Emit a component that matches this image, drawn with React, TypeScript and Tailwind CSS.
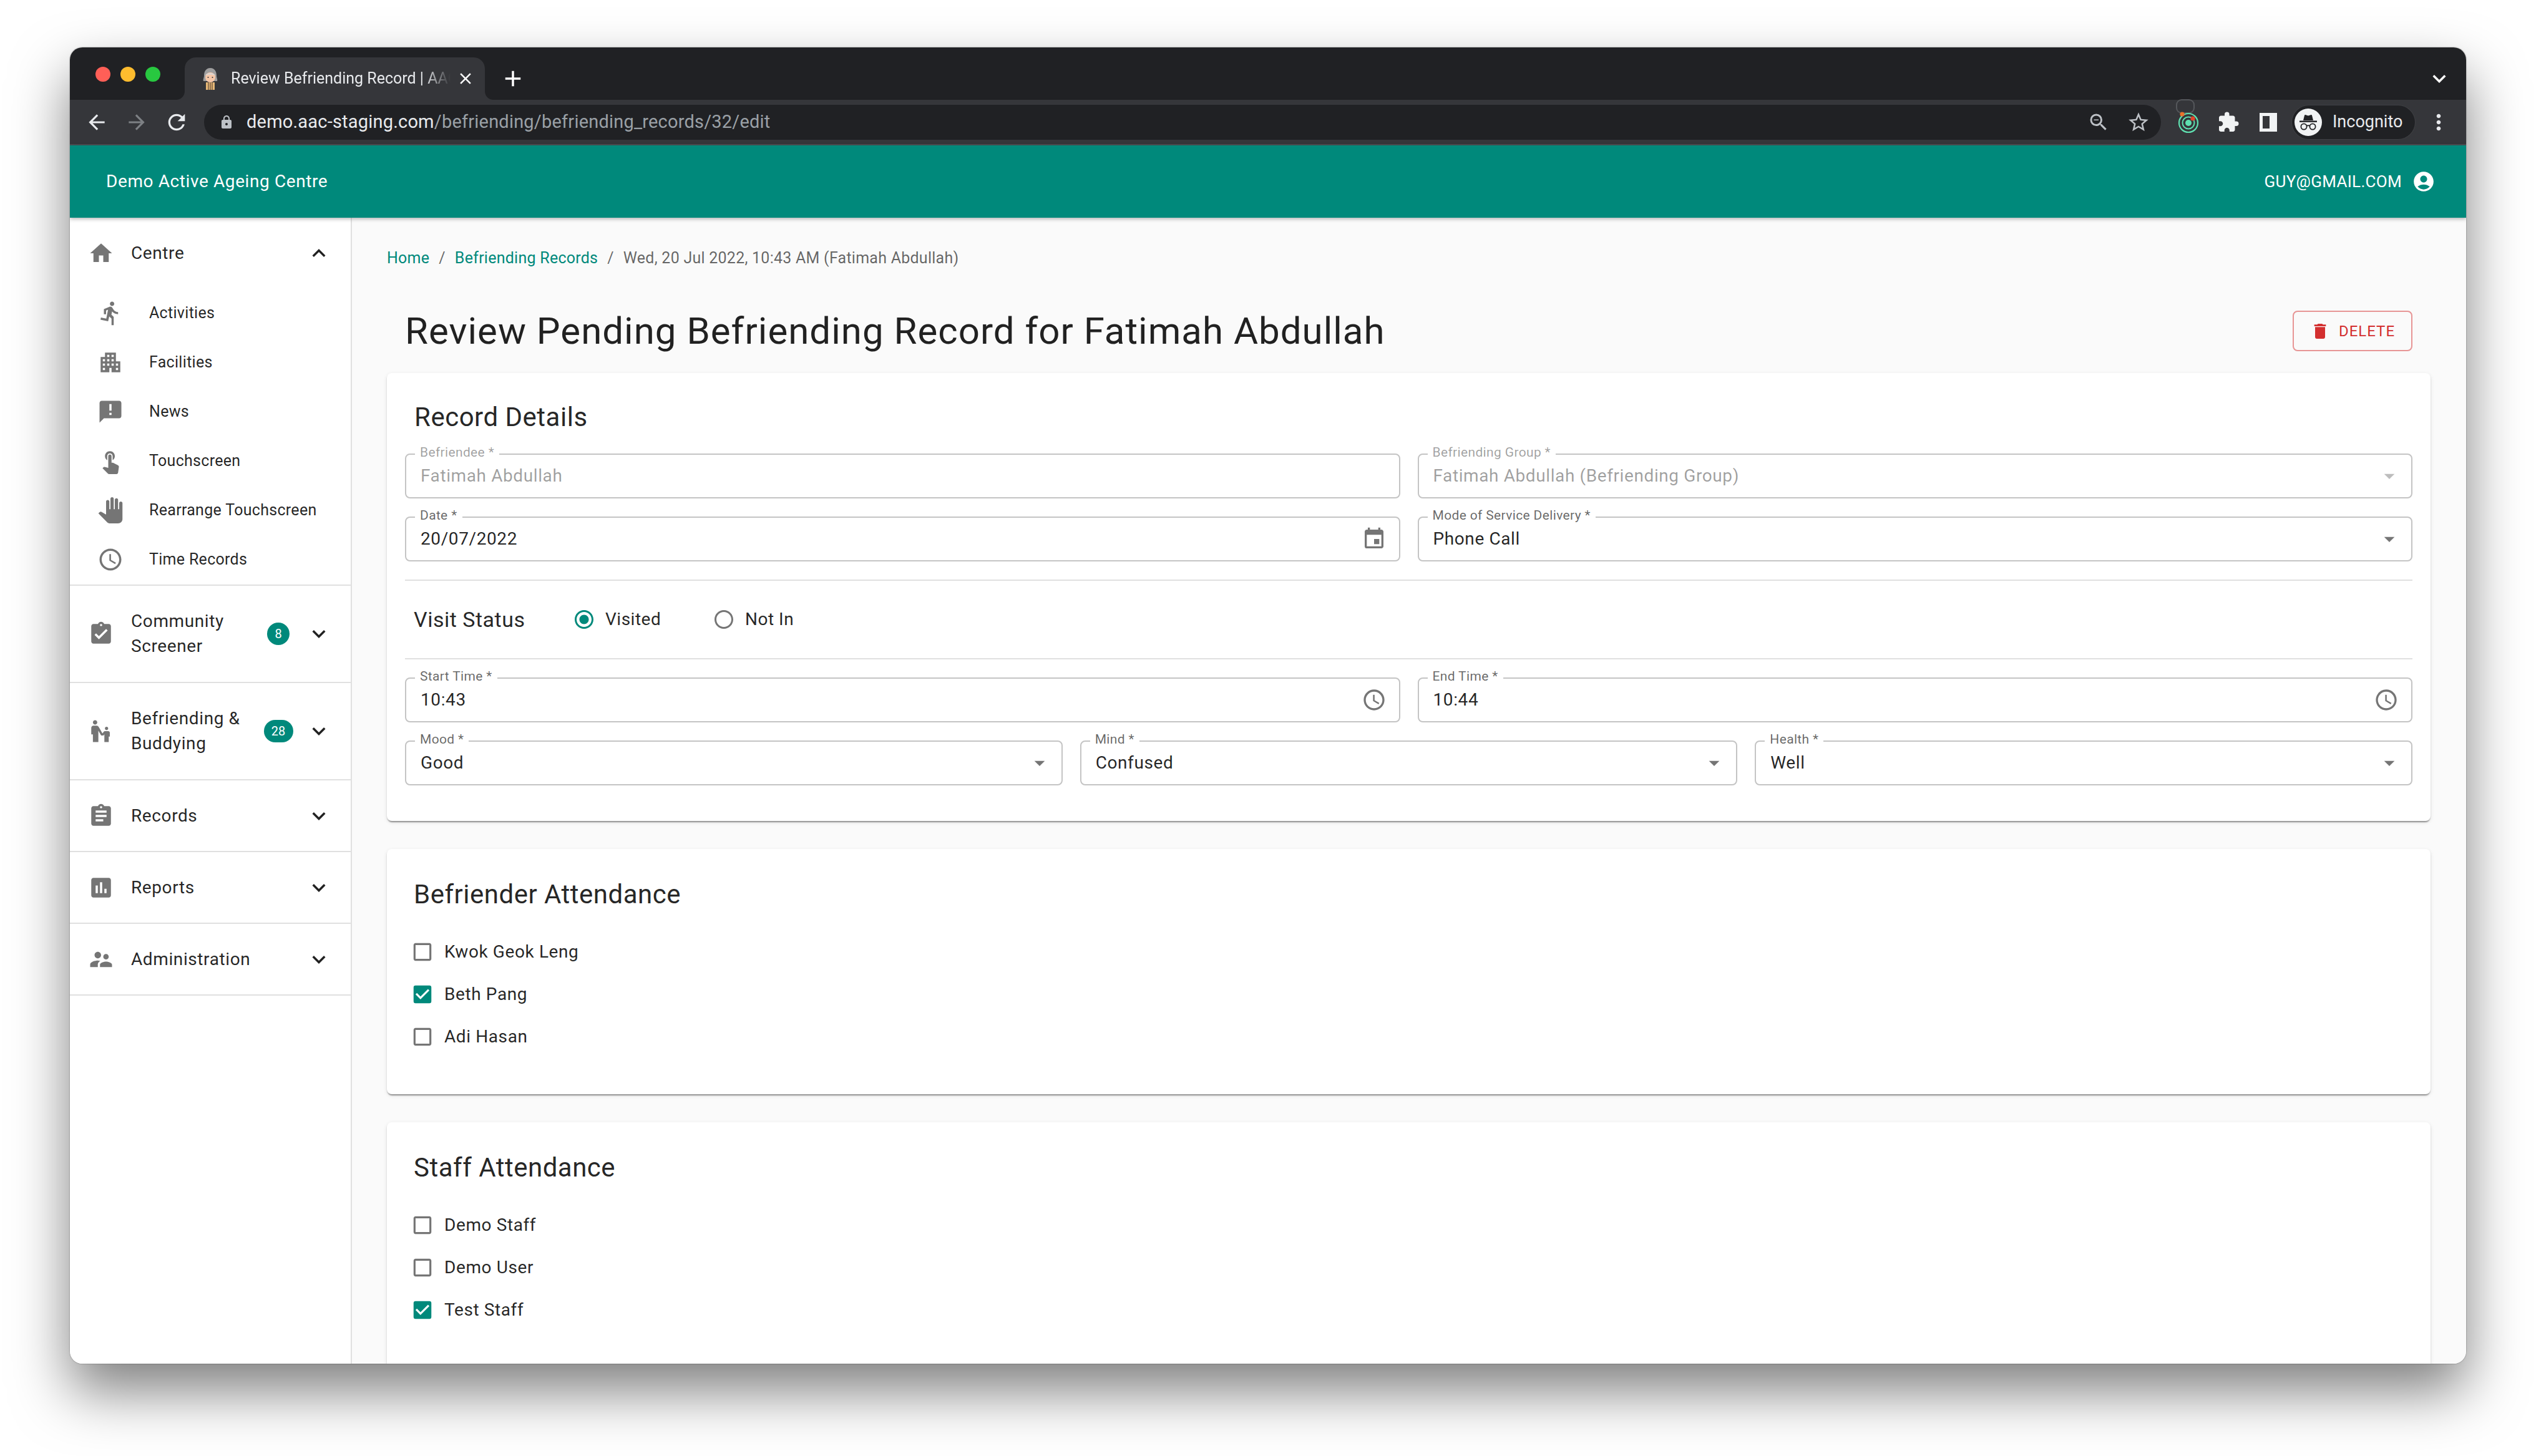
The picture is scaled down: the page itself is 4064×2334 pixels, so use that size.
import React from "react";
import {
  MdHome, MdDirectionsRun, MdApartment, MdAnnouncement, MdTouchApp, MdPanTool, MdAccessTime,
  MdAssignmentTurnedIn, MdEscalatorWarning, MdAssignment, MdAssessment, MdSupervisorAccount,
  MdExpandMore, MdExpandLess, MdEvent, MdArrowDropDown, MdDelete, MdAccountCircle, MdCheckBox,
  MdCheckBoxOutlineBlank, MdRadioButtonChecked, MdRadioButtonUnchecked, MdArrowBack, MdArrowForward,
  MdRefresh, MdLock, MdZoomOut, MdStarBorder, MdExtension, MdMoreVert, MdClose, MdAdd,
} from "react-icons/md";

function Favicon() {
  return (
    <svg width="32" height="36" viewBox="0 0 32 36">
      <path d="M16 1c-7 0-10 6-10 12 0 4-2 6-1 9h22c1-3-1-5-1-9 0-6-3-12-10-12z" fill="#9e9e9e" />
      <ellipse cx="16" cy="16" rx="8" ry="8" fill="#f6c7a8" />
      <path d="M8 13c2-5 14-5 16 0-5-2-11-2-16 0z" fill="#d8d8d8" />
      <circle cx="12.5" cy="16" r="1" fill="#333" />
      <circle cx="19.5" cy="16" r="1" fill="#333" />
      <rect x="9" y="24" width="14" height="12" fill="#e6b877" />
      <path d="M13 24v12M16 24v12M19 24v12" stroke="#5b4636" strokeWidth="1.2" />
    </svg>
  );
}

function Orbit() {
  return (
    <svg width="44" height="60" viewBox="0 0 44 60">
      <rect x="3" y="1" width="28" height="21" rx="8" fill="none" stroke="#55575b" strokeWidth="2" />
      <circle cx="22" cy="38" r="15" fill="none" stroke="#5fe0b0" strokeWidth="2.2" />
      <circle cx="22" cy="38" r="9.5" fill="none" stroke="#5fe0b0" strokeWidth="2" />
      <circle cx="22" cy="38" r="5" fill="#5fe0b0" />
      <circle cx="12" cy="24" r="3.6" fill="#e8712c" />
      <circle cx="29" cy="31" r="3.6" fill="#e0452c" />
    </svg>
  );
}

function Incognito() {
  return (
    <svg width="44" height="44" viewBox="0 0 44 44">
      <circle cx="22" cy="22" r="22" fill="#f1f3f4" />
      <path d="M14 19l2-8c.3-1 1-1.2 2-.8l4 1.2 4-1.2c1-.4 1.700-.2 2 .8l2 8z" fill="#202124" />
      <rect x="8" y="19.500" width="28" height="2.400" fill="#202124" />
      <circle cx="15" cy="29" r="4.600" fill="none" stroke="#202124" strokeWidth="1.800" />
      <circle cx="29" cy="29" r="4.600" fill="none" stroke="#202124" strokeWidth="1.800" />
      <path d="M19.500 28c1.500-1 3.500-1 5 0" fill="none" stroke="#202124" strokeWidth="1.800" />
    </svg>
  );
}

function TabFlare({ flip }: { flip?: boolean }) {
  return (
    <svg width="14" height="14" viewBox="0 0 14 14" className={flip ? "absolute bottom-0 -right-[14px] -scale-x-100" : "absolute bottom-0 -left-[14px]"}>
      <path d="M14 0v14H0c8 0 14-6 14-14z" fill="#35363a" />
    </svg>
  );
}

function ChromeBar() {
  return (
    <div className="shrink-0">
      <div className="flex h-[84px] bg-[#202124]">
        <div className="ml-[41px] mt-[31px] flex h-[24px] gap-[16px]">
          <div className="h-[24px] w-[24px] rounded-full bg-[#ff5f57]" />
          <div className="h-[24px] w-[24px] rounded-full bg-[#febc2e]" />
          <div className="h-[24px] w-[24px] rounded-full bg-[#28c840]" />
        </div>
        <div className="relative ml-[39px] mt-[16px] flex h-[68px] w-[481px] items-center rounded-t-[18px] bg-[#35363a] pl-[25px]">
          <TabFlare />
          <TabFlare flip />
          <Favicon />
          <div className="ml-[17px] w-[352px] overflow-hidden whitespace-nowrap text-[25px] text-[#e8eaed] [mask-image:linear-gradient(to_right,black_88%,transparent_100%)]">
            Review Befriending Record | AAC
          </div>
          <MdClose size={30} className="ml-[9px] text-white" />
        </div>
        <MdAdd size={42} className="ml-[24px] mt-[29px] text-white" />
        <MdExpandMore size={42} className="ml-auto mr-[22px] mt-[29px] text-white" />
      </div>
      <div className="flex h-[73px] items-center border-b-2 border-[#4d4e52] bg-[#35363a] pl-[11px]">
        <div className="flex w-[64px] justify-center"><MdArrowBack size={38} className="text-[#e8eaed]" /></div>
        <div className="flex w-[64px] justify-center"><MdArrowForward size={38} className="text-[#7d8084]" /></div>
        <div className="flex w-[64px] justify-center"><MdRefresh size={40} className="text-[#e8eaed]" /></div>
        <div className="ml-[12px] flex h-[56px] w-[3136px] items-center rounded-full bg-[#202124] pl-[24px] pr-[4px]">
          <MdLock size={24} className="text-[#bdc1c6]" />
          <div className="ml-[20px] whitespace-nowrap text-[29px] tracking-[0.2px] text-[#e8eaed]">
            demo.aac-staging.com<span className="text-[#9aa0a6]">/befriending/befriending_records/32/edit</span>
          </div>
          <div className="ml-auto flex w-[64px] justify-center"><MdZoomOut size={36} className="text-[#bdc1c6]" /></div>
          <div className="flex w-[64px] justify-center"><MdStarBorder size={38} className="text-[#bdc1c6]" /></div>
        </div>
        <div className="ml-[12px] flex w-[64px] -translate-y-[7px] justify-center"><Orbit /></div>
        <div className="flex w-[64px] justify-center"><MdExtension size={36} className="text-[#f1f3f4]" /></div>
        <div className="flex w-[64px] justify-center">
          <div className="flex h-[30px] w-[28px] justify-center border-[5px] border-[#f1f3f4] border-r-[12px] bg-[#35363a]" />
        </div>
        <div className="ml-[6px] flex h-[54px] w-[197px] items-center rounded-full bg-[#202124] pl-[4px] ring-1 ring-[#3f4044]">
          <Incognito />
          <span className="ml-[17px] text-[27px] text-[#e8eaed]">Incognito</span>
        </div>
        <div className="ml-[6px] flex w-[64px] justify-center"><MdMoreVert size={40} className="text-[#e8eaed]" /></div>
      </div>
    </div>
  );
}

type IconT = React.ComponentType<{ size?: number; className?: string }>;

function SubItem({ icon: Icon, label }: { icon: IconT; label: string }) {
  return (
    <div className="flex h-[79px] items-center pl-[44px]">
      <Icon size={42} className="shrink-0 text-[#757575]" />
      <span className="ml-[41px] whitespace-nowrap text-[25px] tracking-[0.3px] text-[#000000de]">{label}</span>
    </div>
  );
}

function NavGroup({ icon: Icon, label, badge, tall }: { icon: IconT; label: string; badge?: string; tall?: boolean }) {
  return (
    <div className={`flex items-center border-b-2 border-[#e0e0e0] pl-[29px] pr-[30px] ${tall ? "h-[156px]" : "h-[115px]"}`}>
      <Icon size={42} className="shrink-0 text-[#757575]" />
      <span className="ml-[27px] w-[210px] text-[28px] leading-[40px] tracking-[0.6px] text-[#000000de]">{label}</span>
      {badge ? (
        <div className="ml-auto mr-[20px] flex w-[48px] justify-center">
          <span className={`flex h-[36px] items-center justify-center rounded-full bg-[#00897b] text-[20px] text-white ${badge.length > 1 ? "w-[47px]" : "w-[36px]"}`}>{badge}</span>
        </div>
      ) : null}
      <MdExpandMore size={42} className={`shrink-0 text-[#000000de] ${badge ? "" : "ml-auto"}`} />
    </div>
  );
}

function Sidebar() {
  return (
    <aside className="w-[452px] shrink-0 border-r-2 border-[#e0e0e0] bg-white">
      <div className="h-[590px] border-b-2 border-[#e0e0e0]">
        <div className="flex h-[113px] items-center pl-[29px] pr-[30px]">
          <MdHome size={42} className="text-[#757575]" />
          <span className="ml-[27px] text-[28px] tracking-[0.6px] text-[#000000de]">Centre</span>
          <MdExpandLess size={42} className="ml-auto text-[#000000de]" />
        </div>
        <SubItem icon={MdDirectionsRun} label="Activities" />
        <SubItem icon={MdApartment} label="Facilities" />
        <SubItem icon={MdAnnouncement} label="News" />
        <SubItem icon={MdTouchApp} label="Touchscreen" />
        <SubItem icon={MdPanTool} label="Rearrange Touchscreen" />
        <SubItem icon={MdAccessTime} label="Time Records" />
      </div>
      <NavGroup icon={MdAssignmentTurnedIn} label="Community Screener" badge="8" tall />
      <NavGroup icon={MdEscalatorWarning} label="Befriending & Buddying" badge="28" tall />
      <NavGroup icon={MdAssignment} label="Records" />
      <NavGroup icon={MdAssessment} label="Reports" />
      <NavGroup icon={MdSupervisorAccount} label="Administration" />
    </aside>
  );
}

function Field({ label, value, disabled, icon }: { label: string; value: string; disabled?: boolean; icon?: "date" | "time" | "select" }) {
  return (
    <div className="relative flex h-[72px] items-center rounded-[8px] border-2 border-[#c4c4c4] pl-[23px] pr-[10px]">
      <span className={`absolute -top-[16px] left-[14px] bg-white px-[8px] text-[21px] leading-[24px] tracking-[0.35px] ${disabled ? "text-[#00000061]" : "text-[#00000099]"}`}>{label}</span>
      <span className={`text-[28px] tracking-[0.6px] ${disabled ? "text-[#00000061]" : "text-[#000000de]"}`}>{value}</span>
      {icon === "date" ? <MdEvent size={40} className="ml-auto mr-[10px] text-[#757575]" /> : null}
      {icon === "time" ? <MdAccessTime size={40} className="ml-auto mr-[10px] text-[#757575]" /> : null}
      {icon === "select" ? <MdArrowDropDown size={40} className={`ml-auto mr-[5px] ${disabled ? "text-[#bdbdbd]" : "text-[#757575]"}`} /> : null}
    </div>
  );
}

function Check({ label, checked }: { label: string; checked?: boolean }) {
  return (
    <div className="flex h-[68px] items-center">
      {checked ? (
        <MdCheckBox size={38} className="-ml-[5px] text-[#00897b]" />
      ) : (
        <MdCheckBoxOutlineBlank size={38} className="-ml-[5px] text-[#757575]" />
      )}
      <span className="ml-[16px] text-[28px] tracking-[0.6px] text-[#000000de]">{label}</span>
    </div>
  );
}

const cardClass = "rounded-[8px] bg-white shadow-[0_4px_2px_-2px_rgba(0,0,0,0.25),0_2px_2px_0_rgba(0,0,0,0.16),0_2px_6px_0_rgba(0,0,0,0.1)]";

function Main() {
  return (
    <main className="min-w-0 flex-1 overflow-hidden bg-[#fafafa] pl-[56px] pr-[57px]">
      <div className="flex h-[130px] items-center text-[25px] tracking-[0.25px]">
        <span className="text-[#00897b]">Home</span>
        <span className="mx-[15px] text-[#00000099]">/</span>
        <span className="text-[#00897b]">Befriending Records</span>
        <span className="mx-[15px] text-[#00000099]">/</span>
        <span className="text-[#00000099]">Wed, 20 Jul 2022, 10:43 AM (Fatimah Abdullah)</span>
      </div>
      <div className="mb-[16px] flex h-[103px] items-center pl-[29px] pr-[29px]">
        <h1 className="text-[60px] font-normal leading-[80px] tracking-[1px] text-[#000000de]">Review Pending Befriending Record for Fatimah Abdullah</h1>
        <button className="ml-auto flex h-[65px] w-[192px] items-center justify-center rounded-[8px] border-2 border-[#d32f2f80] text-[24px] tracking-[1px] text-[#d32f2f]">
          <MdDelete size={32} className="mr-[14px]" />DELETE
        </button>
      </div>

      <section className={`${cardClass} px-[29px] pb-[57px] pt-[47px]`}>
        <h2 className="pl-[15px] text-[42px] font-normal leading-[48px] tracking-[0.5px] text-[#000000de]">Record Details</h2>
        <div className="mt-[34px] grid grid-cols-2 gap-x-[28px] gap-y-[29px]">
          <Field label="Befriendee *" value="Fatimah Abdullah" disabled />
          <Field label="Befriending Group *" value="Fatimah Abdullah (Befriending Group)" disabled icon="select" />
          <Field label="Date *" value="20/07/2022" icon="date" />
          <Field label="Mode of Service Delivery *" value="Phone Call" icon="select" />
        </div>
        <div className="mt-[29px] flex h-[128px] items-center border-y-2 border-[#e0e0e0] pl-[14px]">
          <span className="w-[255px] text-[34px] tracking-[0.5px] text-[#000000de]">Visit Status</span>
          <MdRadioButtonChecked size={36} className="text-[#00897b]" />
          <span className="ml-[16px] w-[172px] text-[28px] tracking-[0.5px] text-[#000000de]">Visited</span>
          <MdRadioButtonUnchecked size={36} className="text-[#757575]" />
          <span className="ml-[16px] text-[28px] tracking-[0.5px] text-[#000000de]">Not In</span>
        </div>
        <div className="mt-[29px] grid grid-cols-2 gap-x-[28px]">
          <Field label="Start Time *" value="10:43" icon="time" />
          <Field label="End Time *" value="10:44" icon="time" />
        </div>
        <div className="mt-[29px] grid grid-cols-3 gap-x-[28px]">
          <Field label="Mood *" value="Good" icon="select" />
          <Field label="Mind *" value="Confused" icon="select" />
          <Field label="Health *" value="Well" icon="select" />
        </div>
      </section>

      <section className={`${cardClass} mt-[45px] h-[393px] px-[43px] pt-[49px]`}>
        <h2 className="text-[42px] font-normal leading-[48px] tracking-[0.5px] text-[#000000de]">Befriender Attendance</h2>
        <div className="mt-[34px]">
          <Check label="Kwok Geok Leng" />
          <Check label="Beth Pang" checked />
          <Check label="Adi Hasan" />
        </div>
      </section>

      <section className={`${cardClass} mt-[45px] px-[43px] pb-[59px] pt-[49px]`}>
        <h2 className="text-[42px] font-normal leading-[48px] tracking-[0.5px] text-[#000000de]">Staff Attendance</h2>
        <div className="mt-[34px]">
          <Check label="Demo Staff" />
          <Check label="Demo User" />
          <Check label="Test Staff" checked />
        </div>
      </section>
    </main>
  );
}

export default function App() {
  return (
    <div className="h-[2334px] w-[4064px] overflow-hidden bg-white pl-[112px] pt-[76px] font-['Roboto',sans-serif]">
      <div className="flex h-[2110px] w-[3840px] flex-col overflow-hidden rounded-[20px] shadow-[0_44px_90px_rgba(0,0,0,0.5),0_0_2px_rgba(0,0,0,0.5)]">
        <ChromeBar />
        <header className="relative z-10 flex h-[116px] shrink-0 items-center bg-[#00897b] pl-[58px] pr-[49px] text-white shadow-[0_2px_6px_rgba(0,0,0,0.3)]">
          <span className="text-[28px] tracking-[0.6px]">Demo Active Ageing Centre</span>
          <span className="ml-auto text-[26px] tracking-[0.3px]">GUY@GMAIL.COM</span>
          <MdAccountCircle size={38} className="ml-[16px]" />
        </header>
        <div className="flex min-h-0 flex-1">
          <Sidebar />
          <Main />
        </div>
      </div>
    </div>
  );
}
